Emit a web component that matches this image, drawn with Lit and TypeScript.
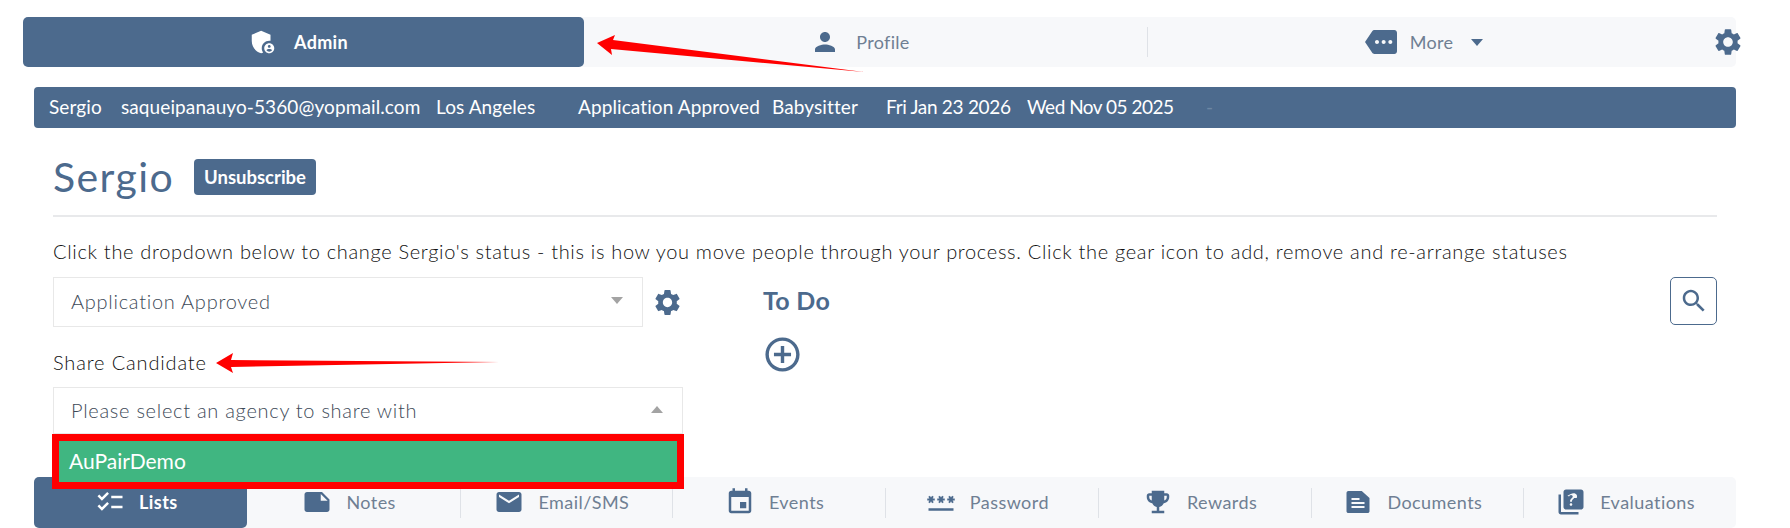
import { LitElement, html, css, svg } from 'lit';
import { customElement } from 'lit/decorators.js';

const ICONS: Record<string, string> = {
  admin: 'M17 11c.34 0 .67.04 1 .09V6.27L10.5 3 3 6.27v4.91c0 4.54 3.2 8.79 7.5 9.82.55-.13 1.08-.32 1.6-.55-.69-.98-1.1-2.17-1.1-3.45 0-3.31 2.69-6 6-6zM17 13c-2.21 0-4 1.79-4 4s1.79 4 4 4 4-1.79 4-4-1.79-4-4-4zm0 1.38c.62 0 1.12.51 1.12 1.12s-.51 1.12-1.12 1.12-1.12-.51-1.12-1.12.5-1.12 1.12-1.12zm0 5.37c-.93 0-1.74-.46-2.24-1.17.05-.72 1.51-1.08 2.24-1.08s2.19.36 2.24 1.08c-.5.71-1.31 1.17-2.24 1.17z',
  person: 'M12 12c2.21 0 4-1.79 4-4s-1.79-4-4-4-4 1.79-4 4 1.79 4 4 4zm0 2c-2.67 0-8 1.34-8 4v2h16v-2c0-2.66-5.33-4-8-4z',
  more: 'M22 3H7c-.69 0-1.23.35-1.59.88L0 12l5.41 8.11c.36.53.9.89 1.59.89h15c1.1 0 2-.9 2-2V5c0-1.1-.9-2-2-2zM9 13.5c-.83 0-1.5-.67-1.5-1.5s.67-1.5 1.5-1.5 1.5.67 1.5 1.5-.67 1.5-1.5 1.5zm5 0c-.83 0-1.5-.67-1.5-1.5s.67-1.5 1.5-1.5 1.5.67 1.5 1.5-.67 1.5-1.5 1.5zm5 0c-.83 0-1.5-.67-1.5-1.5s.67-1.5 1.5-1.5 1.5.67 1.5 1.5-.67 1.5-1.5 1.5z',
  gear: 'M19.14 12.94c.04-.3.06-.61.06-.94 0-.32-.02-.64-.07-.94l2.03-1.58c.18-.14.23-.41.12-.61l-1.92-3.32c-.12-.22-.37-.29-.59-.22l-2.39.96c-.5-.38-1.03-.7-1.62-.94l-.36-2.54c-.04-.24-.24-.41-.48-.41h-3.84c-.24 0-.43.17-.47.41l-.36 2.54c-.59.24-1.13.57-1.62.94l-2.39-.96c-.22-.08-.47 0-.59.22L2.74 8.87c-.12.21-.08.47.12.61l2.03 1.58c-.05.3-.09.63-.09.94s.02.64.07.94l-2.03 1.58c-.18.14-.23.41-.12.61l1.92 3.32c.12.22.37.29.59.22l2.39-.96c.5.38 1.03.7 1.62.94l.36 2.54c.05.24.24.41.48.41h3.84c.24 0 .44-.17.47-.41l.36-2.54c.59-.24 1.13-.56 1.62-.94l2.39.96c.22.08.47 0 .59-.22l1.92-3.32c.12-.22.07-.47-.12-.61l-2.01-1.58zM12 15.6c-1.98 0-3.6-1.62-3.6-3.6s1.62-3.6 3.6-3.6 3.6 1.62 3.6 3.6-1.62 3.6-3.6 3.6z',
  search: 'M15.5 14h-.79l-.28-.27C15.41 12.59 16 11.11 16 9.5 16 5.91 13.09 3 9.5 3S3 5.91 3 9.5 5.91 16 9.5 16c1.61 0 3.09-.59 4.23-1.57l.27.28v.79l5 4.99L20.49 19l-4.99-5zm-6 0C7.01 14 5 11.99 5 9.5S7.01 5 9.5 5 14 7.01 14 9.5 11.99 14 9.5 14z',
  add: 'M13 7h-2v4H7v2h4v4h2v-4h4v-2h-4V7zm-1-5C6.48 2 2 6.48 2 12s4.48 10 10 10 10-4.48 10-10S17.52 2 12 2zm0 18c-4.41 0-8-3.59-8-8s3.59-8 8-8 8 3.59 8 8-3.59 8-8 8z',
  lists: 'M22 7h-9v2h9V7zm0 8h-9v2h9v-2zM5.54 11 2 7.46l1.41-1.41 2.12 2.12 4.24-4.24 1.41 1.41L5.54 11zm0 8L2 15.46l1.41-1.41 2.12 2.12 4.24-4.24 1.41 1.41L5.54 19z',
  note: 'M22 10l-6-6H4c-1.1 0-2 .9-2 2v12.01c0 1.1.9 1.99 2 1.99l16-.01c1.1 0 2-.89 2-1.99v-8zm-7-4.5l5.5 5.5H15V5.5z',
  mail: 'M20 4H4c-1.1 0-1.99.9-1.99 2L2 18c0 1.1.9 2 2 2h16c1.1 0 2-.9 2-2V6c0-1.1-.9-2-2-2zm0 4l-8 5-8-5V6l8 5 8-5v2z',
  event: 'M17 12h-5v5h5v-5zM16 1v2H8V1H6v2H5c-1.11 0-1.99.9-1.99 2L3 19c0 1.1.89 2 2 2h14c1.1 0 2-.9 2-2V5c0-1.1-.9-2-2-2h-1V1h-2zm3 18H5V8h14v11z',
  password: 'M2 17h20v2H2zm1.15-4.05L4 11.47l.85 1.48 1.3-.75-.85-1.48H7v-1.5H5.3l.85-1.47L4.85 7 4 8.47 3.15 7l-1.3.75.85 1.47H1v1.5h1.7l-.85 1.48 1.3.75zm6.7-.75 1.3.75.85-1.48.85 1.48 1.3-.75-.85-1.48H15v-1.5h-1.7l.85-1.47-1.3-.75L12 8.47 11.15 7l-1.3.75.85 1.47H9v1.5h1.7l-.85 1.48zM23 9.22h-1.7l.85-1.47-1.3-.75L20 8.47 19.15 7l-1.3.75.85 1.47H17v1.5h1.7l-.85 1.48 1.3.75.85-1.48.85 1.48 1.3-.75-.85-1.48H23v-1.5z',
  trophy: 'M19 5h-2V3H7v2H5c-1.1 0-2 .9-2 2v1c0 2.55 1.92 4.63 4.39 4.94.63 1.5 1.98 2.63 3.61 2.96V19H7v2h10v-2h-4v-3.1c1.63-.33 2.98-1.46 3.61-2.96C19.08 12.63 21 10.55 21 8V7c0-1.1-.9-2-2-2zM5 8V7h2v3.82C5.84 10.4 5 9.3 5 8zm14 0c0 1.3-.84 2.4-2 2.82V7h2v1z',
  doc: 'M4.3 3.2H15l6.2 5.5v10.6c0 .8-.7 1.5-1.5 1.5H4.3c-.8 0-1.5-.7-1.5-1.5V4.7c0-.8.7-1.5 1.5-1.5zM6.8 8.8h6.4v1.6H6.8zM6.8 12h10.4v1.6H6.8zM6.8 15.2h10.4v1.6H6.8z',
  quiz: 'M4 6H2v14c0 1.1.9 2 2 2h14v-2H4V6zm16-4H8c-1.1 0-2 .9-2 2v12c0 1.1.9 2 2 2h12c1.1 0 2-.9 2-2V4c0-1.1-.9-2-2-2zm-7.99 13c-.59 0-1.05-.47-1.05-1.05 0-.59.47-1.04 1.05-1.04.59 0 1.04.45 1.04 1.04 0 .58-.45 1.05-1.04 1.05zm2.5-6.17c-.63.93-1.23 1.21-1.56 1.81-.13.24-.18.4-.18 1.18h-1.52c0-.41-.06-1.08.26-1.65.41-.73 1.18-1.16 1.63-1.8.48-.68.21-1.94-1.14-1.94-.88 0-1.32.67-1.5 1.23l-1.37-.57C11.51 5.96 12.52 5 13.99 5c1.23 0 2.08.56 2.51 1.26.37.61.58 1.73.01 2.57z',
};

const icon = (name: string, size: number) => html`<svg class="ico" width=${size} height=${size} viewBox="0 0 24 24" fill="currentColor">${svg`<path fill-rule="evenodd" d=${ICONS[name]}></path>`}</svg>`;

const INFO = [
  'Sergio',
  'saqueipanauyo-5360@yopmail.com',
  'Los Angeles',
  'Application Approved',
  'Babysitter',
  'Fri Jan 23 2026',
  'Wed Nov 05 2025',
];

const BOTTOM_TABS = [
  ['lists', 'Lists'],
  ['note', 'Notes'],
  ['mail', 'Email/SMS'],
  ['event', 'Events'],
  ['password', 'Password'],
  ['trophy', 'Rewards'],
  ['doc', 'Documents'],
  ['quiz', 'Evaluations'],
];

@customElement('app-root')
export class AppRoot extends LitElement {
  static styles = css`
    :host {
      display: block;
      position: relative;
      width: 1790px;
      height: 528px;
      overflow: hidden;
      background: #fff;
      font-family: 'Lato', 'Open Sans', sans-serif;
      font-size: 18px;
      color: #333;
      --blue: #4c6a8d;
      --muted: #6f7f93;
    }
    .ico { display: block; flex: none; }
    .topbar {
      display: flex;
      height: 50px;
      margin: 17px 54px 0 23px;
      background: #f7f8fa;
      border-radius: 5px;
    }
    .tab {
      flex: 1 1 0;
      min-width: 0;
      box-sizing: border-box;
      display: flex;
      align-items: center;
      justify-content: center;
      gap: 16px;
      color: var(--muted);
      letter-spacing: 0.3px;
    }
    .tab .ico { color: var(--blue); }
    .tab.active {
      background: var(--blue);
      color: #fff;
      font-weight: 700;
      border-radius: 5px;
    }
    .tab.active .ico { color: #fff; }
    .sep {
      flex: none;
      width: 1px;
      margin-right: -1px;
      height: 30px;
      align-self: center;
      background: #dfe2e7;
    }
    .topbar .tab { padding-right: 11px; }
    .topbar .tab:nth-of-type(1) { flex: none; width: 561px; }
    .topbar .tab:nth-of-type(2) { flex: none; width: 563px; }
    .topbar .tab.more { gap: 13px; padding-right: 3px; }
    .gear-wrap {
      flex: none;
      width: 40px;
      display: flex;
      align-items: center;
      justify-content: flex-end;
      color: var(--blue);
      margin-right: -8px;
    }
    .caret {
      width: 0;
      height: 0;
      border-left: 6.5px solid transparent;
      border-right: 6.5px solid transparent;
      border-top: 7px solid var(--blue);
      margin-left: 5px;
    }
    .info {
      display: grid;
      grid-template-columns: 72px 315px 142px 194px 114px 141px 179px auto;
      align-items: center;
      box-sizing: border-box;
      height: 41px;
      margin: 20px 54px 0 34px;
      padding: 0 0 2px 15px;
      background: var(--blue);
      border-radius: 4px;
      color: #fff;
      font-size: 19px;
      letter-spacing: 0.1px;
    }
    .info span { white-space: nowrap; }
    .info span:nth-child(6) { letter-spacing: -0.3px; }
    .info span:nth-child(7) { letter-spacing: -0.5px; }
    .info .dash { color: #6d87a3; }
    .content { margin: 0 73px 0 53px; }
    .head {
      display: flex;
      align-items: center;
      gap: 20px;
      height: 36px;
      margin-top: 31px;
    }
    .head h1 {
      margin: 0;
      font-size: 41px;
      font-weight: 400;
      color: var(--blue);
      line-height: 36px;
      letter-spacing: 1.4px;
    }
    .unsub {
      display: flex;
      align-items: center;
      height: 36px;
      padding: 0 10px;
      background: var(--blue);
      color: #fff;
      font-weight: 700;
      font-size: 18.5px;
      border-radius: 4px;
    }
    hr {
      border: 0;
      border-top: 2px solid #e8e9eb;
      margin: 20px 0 0;
    }
    .help {
      margin: 0 0 1px;
      height: 59px;
      line-height: 68px;
      font-size: 20px;
      font-weight: 300;
      letter-spacing: 0.68px;
      color: #111;
      white-space: nowrap;
    }
    .work { display: flex; }
    .left { flex: none; width: 630px; }
    .status-row { display: flex; align-items: center; gap: 9px; }
    .select {
      display: flex;
      align-items: center;
      justify-content: space-between;
      box-sizing: border-box;
      flex: none;
      padding: 0 19px 0 17px;
      background: #fff;
      border: 1px solid #e8e8e8;
      color: #3d4957;
      font-size: 20px;
      font-weight: 300;
      letter-spacing: 0.74px;
    }
    .select.status { width: 590px; height: 50px; padding-bottom: 3px; }
    .status-row .ico { color: var(--blue); }
    .down, .up {
      width: 0;
      height: 0;
      border-left: 6px solid transparent;
      border-right: 6px solid transparent;
    }
    .down { border-top: 7px solid #a3a3a3; }
    .up { border-bottom: 7px solid #a3a3a3; }
    .share-label {
      height: 60px;
      line-height: 70px;
      font-size: 20px;
      font-weight: 300;
      letter-spacing: 0.85px;
      color: #111;
    }
    .share {
      position: relative;
      width: 630px;
    }
    .select.agency { height: 47px; letter-spacing: 0.72px; padding-bottom: 2px; }
    .menu {
      position: absolute;
      z-index: 2;
      top: 47px;
      left: -1px;
      width: 632px;
      height: 55px;
      box-sizing: border-box;
      border: 7px solid #ff0000;
      background: #40b681;
      color: #fff;
      display: flex;
      align-items: center;
      padding-left: 10px;
      padding-bottom: 2px;
      font-size: 21px;
    }
    .right { flex: 1; margin-left: 80px; }
    .todo-head {
      display: flex;
      align-items: flex-start;
      justify-content: space-between;
      height: 50px;
    }
    .todo-head h2 {
      margin: 0;
      font-size: 25px;
      line-height: 46px;
      font-weight: 700;
      letter-spacing: 0.3px;
      color: var(--blue);
    }
    .search {
      display: flex;
      align-items: center;
      justify-content: center;
      box-sizing: border-box;
      width: 47px;
      height: 48px;
      border: 1px solid var(--blue);
      border-radius: 5px;
      color: var(--blue);
    }
    .add {
      display: block;
      margin: 7px 0 0 -1px;
      color: var(--blue);
    }
    .bottombar {
      display: flex;
      height: 51px;
      margin: 43px 54px 0 34px;
      background: #f7f8fa;
      border-radius: 5px;
    }
    .bottombar .tab { gap: 14px; padding-right: 8px; letter-spacing: 0.45px; }
    .bottombar .tab > * { margin-bottom: 2px; }
    .overlay {
      position: absolute;
      left: 0;
      top: 0;
      z-index: 3;
      pointer-events: none;
    }
  `;

  render() {
    return html`
      <div class="topbar">
        <div class="tab active">${icon('admin', 30)}<span>Admin</span></div>
        <div class="tab">${icon('person', 30)}<span>Profile</span></div>
        <div class="sep"></div>
        <div class="tab more">${icon('more', 32)}<span>More</span><i class="caret"></i></div>
        <div class="gear-wrap">${icon('gear', 32)}</div>
      </div>

      <div class="info">
        ${INFO.map(t => html`<span>${t}</span>`)}
        <span class="dash">-</span>
      </div>

      <div class="content">
        <div class="head">
          <h1>Sergio</h1>
          <div class="unsub">Unsubscribe</div>
        </div>
        <hr />
        <p class="help">Click the dropdown below to change Sergio's status - this is how you move people through your process. Click the gear icon to add, remove and re-arrange statuses</p>
        <div class="work">
          <div class="left">
            <div class="status-row">
              <div class="select status"><span>Application Approved</span><i class="down"></i></div>
              ${icon('gear', 31)}
            </div>
            <div class="share-label">Share Candidate</div>
            <div class="share">
              <div class="select agency"><span>Please select an agency to share with</span><i class="up"></i></div>
              <div class="menu">AuPairDemo</div>
            </div>
          </div>
          <div class="right">
            <div class="todo-head">
              <h2>To Do</h2>
              <div class="search">${icon('search', 30)}</div>
            </div>
            <div class="add">${icon('add', 41)}</div>
          </div>
        </div>
      </div>

      <div class="bottombar">
        ${BOTTOM_TABS.map(([ic, label], i) => html`
          ${i > 1 ? html`<div class="sep"></div>` : ''}
          <div class="tab ${i === 0 ? 'active' : ''}">${icon(ic, 30)}<span>${label}</span></div>
        `)}
      </div>

      <!-- red annotation arrows -->
      <svg class="overlay" width="1790" height="528" viewBox="0 0 1790 528">
        <polygon fill="#ff0000" points="597,43 615,35 613,40 864,72 611,49 612,55"></polygon>
        <polygon fill="#ff0000" points="216,363 233,353 231,360 499,362 231,367 233,373"></polygon>
      </svg>
    `;
  }
}
